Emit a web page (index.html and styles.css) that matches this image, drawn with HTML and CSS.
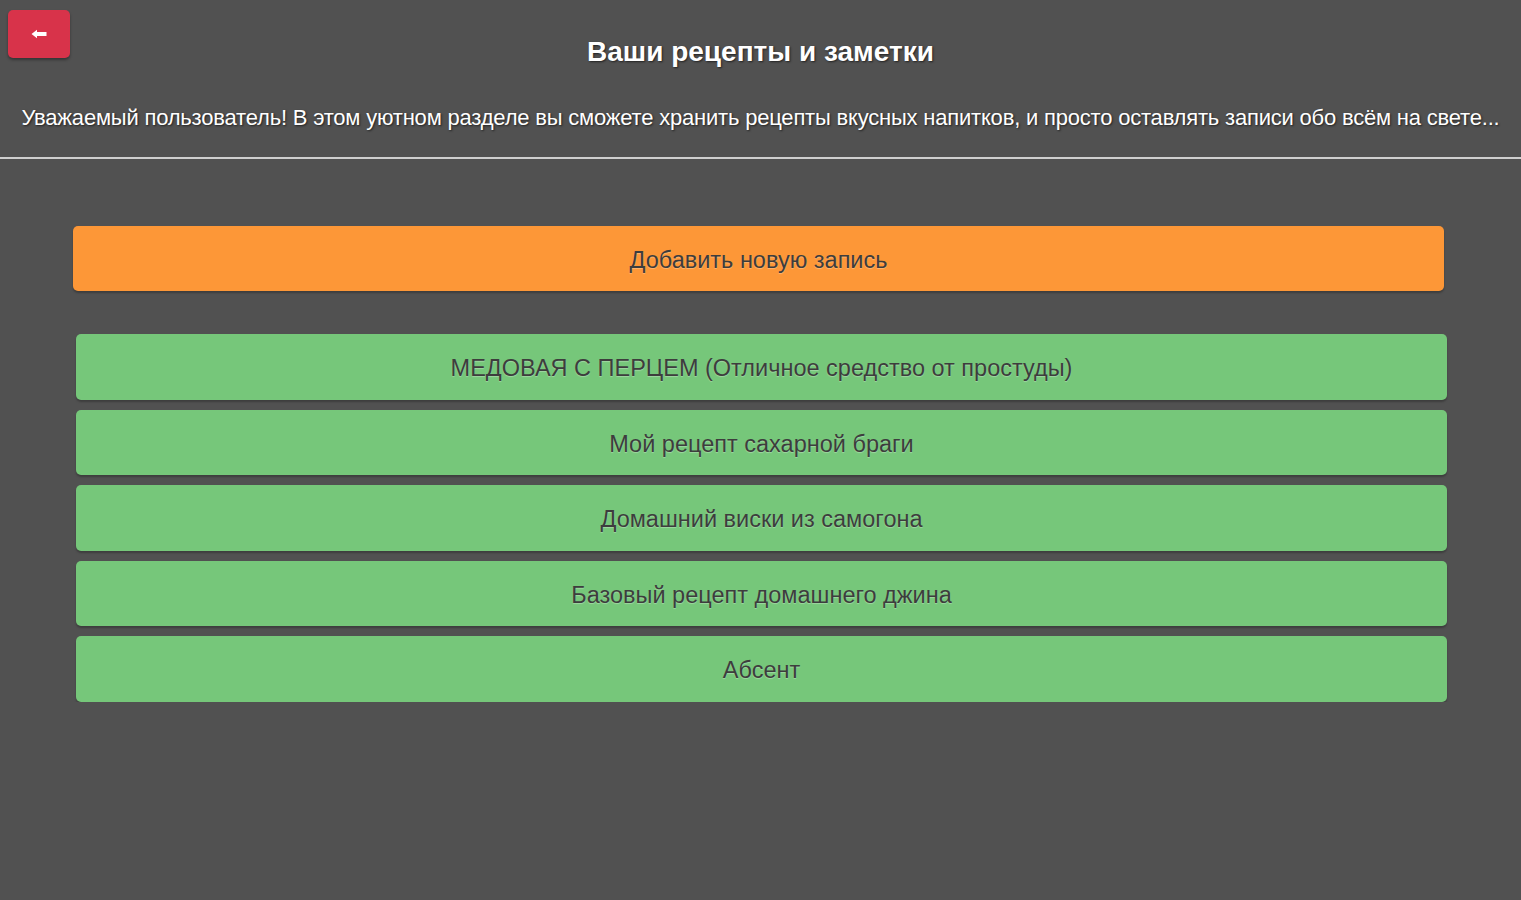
FILE: index.html
```html
<!DOCTYPE html>
<html>
<head>
    <title>Ваши рецепты и заметки</title>
    <link rel="stylesheet" href="styles.css">
</head>
<body>
    <div class="header">
        <div class="header-top">
            <div class="back-btn">
                <svg width="16" height="10" viewBox="0 0 16 10">
                    <path d="M0.5 5 L6 0.8 L6 3 L15.5 3 L15.5 7 L6 7 L6 9.2 Z" fill="#fff"/>
                </svg>
            </div>
            <h1>Ваши рецепты и заметки</h1>
            <div></div>
        </div>
        <p class="intro">Уважаемый пользователь! В этом уютном разделе вы сможете хранить рецепты вкусных напитков, и просто оставлять записи обо всём на свете...</p>
    </div>

    <div class="content">
        <div class="btn add-btn">Добавить новую запись</div>

        <div class="notes">
            <div class="btn note">МЕДОВАЯ С ПЕРЦЕМ (Отличное средство от простуды)</div>
            <div class="btn note">Мой рецепт сахарной браги</div>
            <div class="btn note">Домашний виски из самогона</div>
            <div class="btn note">Базовый рецепт домашнего джина</div>
            <div class="btn note">Абсент</div>
        </div>
    </div>
</body>
</html>
```

FILE: styles.css
```css
body {
    font-family: "Liberation Sans", Arial, sans-serif;
    margin: 0;
    background-color: #515151;
    color: #fff;
}
.header {
    border-bottom: 2px solid #cfcfcf;
}
.header-top {
    display: grid;
    grid-template-columns: 1fr auto 1fr;
    align-items: start;
    padding: 10px 8px 0 8px;
}
.back-btn {
    width: 62px;
    height: 48px;
    background-color: #d8334a;
    border-radius: 5px;
    box-shadow: 0 2px 3px rgba(0,0,0,0.35);
    display: flex;
    align-items: center;
    justify-content: center;
}
h1 {
    margin: 26px 0 0 0;
    font-size: 28px;
    line-height: 32px;
    text-shadow: 1px 1px 2px #222;
}
.intro {
    margin: 0;
    padding: 37px 20px 26px 20px;
    font-size: 22px;
    line-height: 26px;
    text-align: center;
    white-space: nowrap;
    text-shadow: 1px 1px 2px #222;
    letter-spacing: -0.2px;
}
.content {
    padding: 67px 77px 0 73px;
}
.btn {
    height: 65px;
    box-sizing: border-box;
    padding-top: 4px;
    border-radius: 5px;
    display: flex;
    align-items: center;
    justify-content: center;
    font-size: 23.5px;
    color: #3d3d3d;
    text-shadow: 0 1px 1px rgba(255,255,255,0.3);
    box-shadow: 0 2px 2px rgba(0,0,0,0.25);
}
.add-btn {
    background-color: #fd9737;
}
.notes {
    margin: 43px -3px 0 3px;
    display: flex;
    flex-direction: column;
    gap: 10px;
}
.note {
    height: 65.5px;
    background-color: #76c77a;
}
```
